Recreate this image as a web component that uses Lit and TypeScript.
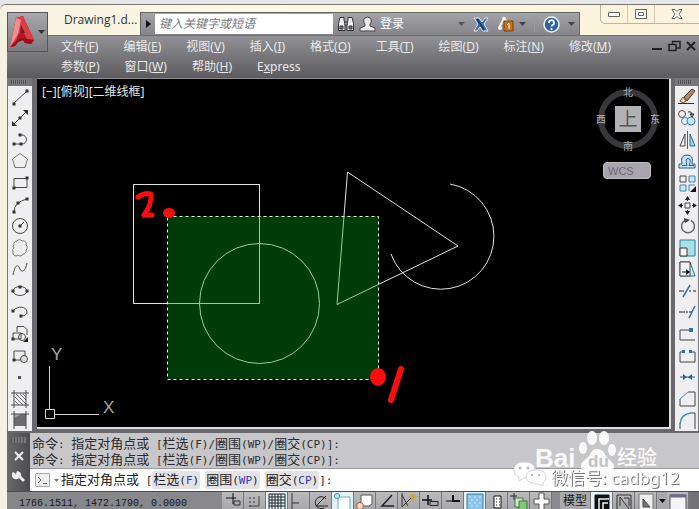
import { LitElement, html, svg, css, type TemplateResult } from "lit";
import { customElement } from "lit/decorators.js";
import { classMap } from "lit/directives/class-map.js";

type Tool = { label: string; art: TemplateResult; on?: boolean };

const node = (x: number, y: number) => svg`<rect x=${x - 1.5} y=${y - 1.5} width="3" height="3" fill="#333" stroke="none"/>`;

const DRAW: Tool[] = [
  { label: "直线", art: svg`<path d="M4 16L17 4"/>${node(4, 17)}${node(17, 4)}` },
  { label: "构造线", art: svg`<path d="M4 16L16 4"/><path d="M2 13v5h5zM18 7V2h-5z" fill="#333" stroke="none"/>${node(10, 10)}` },
  { label: "多段线", art: svg`<path d="M10 5h2a4.500 4.500 0 0 1 0 9H3"/>${node(4, 14)}${node(11, 14)}${node(10, 5)}` },
  { label: "多边形", art: svg`<path d="M10 2.500L17.500 8 15 16.500H5L2.500 8z" stroke="#77777a"/>` },
  { label: "矩形", art: svg`<path d="M4 5.500h13v9H4z"/>${node(4, 15)}${node(17, 5)}` },
  { label: "圆弧", art: svg`<path d="M4 17Q4 7 17 4"/>${node(4, 17)}${node(8, 8)}${node(17, 4)}` },
  { label: "圆", art: svg`<circle cx="10" cy="10" r="7.500"/><path d="M10 10l4-4"/>${node(10, 10)}` },
  { label: "修订云线", art: svg`<path d="M4 7a3 3 0 0 1 3-4 3 3 0 0 1 5 0 3 3 0 0 1 4 4 3 3 0 0 1 0 5 3 3 0 0 1-3 4 3 3 0 0 1-5 1 3 3 0 0 1-5-3 3 3 0 0 1 1-4 2 2 0 0 1 0-3z" stroke="#77777a"/>` },
  { label: "样条曲线", art: svg`<path d="M3 16C6 2 9 7 10 10S15 14 17 4"/>` },
  { label: "椭圆", art: svg`<ellipse cx="10" cy="10" rx="7" ry="4.500"/>${node(3, 10)}${node(17, 10)}${node(10, 6)}` },
  { label: "椭圆弧", art: svg`<path d="M4 8c3-4 13-4 13 2 0 3-3 4-6 4"/>${node(3, 9)}${node(11, 14)}` },
  { label: "插入块", art: svg`<path d="M7 2.500h7l3 3V11M7 2.500V8M3 9h8v6H3z"/><circle cx="12" cy="13" r="3.500"/><path d="M18 13v5h-5z" fill="#222" stroke="none"/>${node(3, 15)}` },
  { label: "创建块", art: svg`<path d="M4 5h11v9H4z"/><circle cx="14" cy="13" r="3.500" fill="#ddd"/>${node(4, 14)}` },
  { label: "点", art: svg`<rect x="8" y="9" width="3" height="3" fill="#555" stroke="none"/>` },
  { label: "图案填充", art: svg`<path d="M4 1v18M16 1v18M1 4h18M1 16h18"/><path d="M5 8l8 8M5 12l4 4M6 5l10 10M10 5l6 6M13 5l3 3" stroke-width=".8"/>` },
  { label: "渐变色", art: svg`<path d="M4 4h12v12H4z" fill="#a2a2a6" stroke="none"/><path d="M4 8L12 4h4v12H4z" fill="#6c6c70" stroke="none"/><path d="M4 1v18M16 1v18M1 4h18"/>` },
];

const MODIFY: Tool[] = [
  { label: "删除", art: svg`<path d="M1 16.500h16" stroke="#333"/><path d="M6 10l3 4-3 2-3-2z" fill="#f3d9b8" stroke="#8a4b20"/><path d="M7 10L15 2l3 2-8 10z" fill="#a8876a" stroke="#5b3a22"/>` },
  { label: "复制", art: svg`<circle cx="5" cy="6" r="3.500"/><circle cx="8" cy="13" r="3.500" stroke="#3f86b5"/><circle cx="14" cy="13" r="4" fill="#bfe6f6" stroke="#3f86b5"/><path d="M11 4q4-1 4 3M13 6h4l-2 3z" stroke="#222"/>` },
  { label: "镜像", art: svg`<path d="M8 4v12H3z"/><path d="M13 4v12h5z" fill="#9fd0e8" stroke="#2c6c96"/><path d="M10.500 1v18" stroke="#2c6c96"/>` },
  { label: "偏移", art: svg`<path d="M2 17h16v-4h-3q2-9-5-9t-5 9H2z" fill="#c4e4f3" stroke="#2c5f86"/><path d="M5 14.500h5q-2-7 1-7 4 0 1 7h5" stroke="#2c5f86"/>` },
  { label: "阵列", art: svg`<path d="M3 3h6v6H3z"/><path d="M12 3h6v6h-6zM3 12h6v6H3z" fill="#c8e8f6" stroke="#3f86b5"/><path d="M12 18v-6h6" stroke="#3f86b5"/><path d="M19 13v6h-6z" fill="#111" stroke="none"/>` },
  { label: "移动", art: svg`<path d="M8 8h5v5H8z"/><path d="M10.500 2v4M10.500 15v4M2 10.500h4M15 10.500h4" stroke="#222"/><path d="M8 5h5l-2.500-4zM8 16h5l-2.500 4zM5 8v5l-4-2.500zM16 8v5l4-2.500z" fill="#222" stroke="none"/>` },
  { label: "旋转", art: svg`<path d="M8 4.500a6.500 6.500 0 1 0 6 0" stroke="#66666a" stroke-width="1.500"/><path d="M7 2l6 2-5 3z" fill="#444" stroke="none"/>` },
  { label: "缩放", art: svg`<path d="M3 2h15v16H3z" fill="#a9e0ea" stroke="#2b7f98"/><path d="M3 10h7v8H3z" fill="#f4f8fa" stroke="#333"/>` },
  { label: "拉伸", art: svg`<path d="M3 3h10l5 14H3z" fill="#cfeaf4" stroke="#2b6c88"/><path d="M3 3v14h10V3z" fill="#f0f4f6" stroke="#444"/><path d="M5 13h6" stroke="#111"/><path d="M9 10v6l4-3z" fill="#111" stroke="none"/>` },
  { label: "修剪", art: svg`<path d="M2 10h5M12 10h2M16 10h3" stroke="#222"/><path d="M6 16L13 4" stroke="#2f74a3" stroke-width="1.500"/>` },
  { label: "延伸", art: svg`<path d="M2 10h6M9 10h2M12 10h3" stroke="#222"/><path d="M12 16L18 4" stroke="#2f74a3" stroke-width="1.500"/>` },
  { label: "打断于点", art: svg`<path d="M13 6H3v10h15" stroke="#444"/><rect x="12" y="4" width="4" height="4" fill="#2f74a3" stroke="none"/>` },
  { label: "打断", art: svg`<path d="M6 6H3v10h15V6h-3" stroke="#444"/><rect x="5" y="4" width="3" height="3" fill="#2f74a3" stroke="none"/><rect x="12" y="4" width="3" height="3" fill="#2f74a3" stroke="none"/>` },
  { label: "合并", art: svg`<path d="M3 10h15" stroke="#2f6485"/><path d="M6 7v6l4-3zM15 7v6l-4-3z" fill="#2f6485" stroke="none"/>` },
  { label: "倒角", art: svg`<path d="M3 10v7h15V3h-7" stroke="#444"/><path d="M3 10L11 3" stroke="#3f8fb5"/>` },
  { label: "圆角", art: svg`<path d="M3 13v6M18 3v16M14 3h4" stroke="#444"/><path d="M3 14Q4 4 14 3" stroke="#3f8fb5" stroke-width="1.500"/>` },
];

const STATUS: Tool[] = [
  { label: "推断约束", art: svg`<path d="M10 1v11M3 6h10" stroke="#111"/><path d="M11 9h6v4h-6z" stroke="#333"/>` },
  { label: "捕捉模式", art: svg`<path d="M4 6h2M8 6h2M4 10h2M8 10h2M4 14h2" stroke="#333"/><path d="M14 4v10H4" stroke="#444"/>` },
  { label: "栅格显示", on: true, art: svg`<path d="M2 2h16v18H2zM5 2v16M8 2v16M11 2v16M14 2v16M2 5h16M2 8h16M2 11h16M2 14h16" stroke="#222"/>` },
  { label: "正交模式", art: svg`<path d="M3 1v17M3 11h7" stroke="#333"/>` },
  { label: "极轴追踪", art: svg`<path d="M15 4L5 14h12M15 7a6 6 0 1 0-2 9" stroke="#222"/>` },
  { label: "对象捕捉", on: true, art: svg`<path d="M5 5h12v14H5z" fill="#fff" stroke="#6fa9c4"/><circle cx="4" cy="4" r="2.500" fill="#bde5f5" stroke="#4b90b5"/>` },
  { label: "三维对象捕捉", art: svg`<path d="M6 3h11v9l-3 2H6z" fill="#fff" stroke="#555"/><circle cx="5" cy="14" r="3.500" fill="#f1d9c8" stroke="#a06040"/>` },
  { label: "对象捕捉追踪", art: svg`<path d="M15 3L5 14h12" stroke="#222" stroke-width="1.500"/>` },
  { label: "动态 UCS", art: svg`<path d="M3 1v14L12 6M3 3l6 11" stroke="#333"/><path d="M14 1v9M10 5h9M11 2l6 6M17 2l-6 6" stroke="#d99b27"/>` },
  { label: "动态输入", art: svg`<path d="M7 3v10M1 8h10" stroke="#111" stroke-width="1.500"/><path d="M9 9.500h8v4H9z" stroke="#222"/>` },
  { label: "线宽", art: svg`<path d="M10 3v6" stroke="#111"/><path d="M3 9h7" stroke="#111"/><path d="M10 3v6h7" stroke="#111" stroke-width="2"/>` },
  { label: "透明度", on: true, art: svg`<path d="M2 2h16v18H2z" fill="#8cc4e8" stroke="#3a7ba8"/><path d="M4 5h2M9 5h2M14 5h2M6 8h2M11 8h2M4 11h2M9 11h2M14 11h2M6 14h2M11 14h2" stroke="#d6ecf8"/>` },
  { label: "快捷特性", art: svg`<path d="M7 4h7v12H7z" fill="#fff" stroke="#111"/><path d="M9 7h1M12 7h1M9 10h1M12 10h1M9 13h1M12 13h1" stroke="#111"/>` },
  { label: "选择循环", art: svg`<path d="M5 1v7M1 4h7" stroke="#222"/><path d="M6 6h8v9H6z" stroke="#3c7a38" fill="#cfe8c8"/><path d="M10 9h8v9h-8z" fill="#86c57c" stroke="#3c7a38"/>` },
  { label: "注释监视器", art: svg`<path d="M8 1h5v6h5v5h-5v6H8v-6H3V7h5z" fill="#fff" stroke="#555"/>` },
];

const LAYOUT: Tool[] = [
  { label: "快速查看布局", on: true, art: svg`<path d="M3 3h14v15H3z" fill="#111" stroke="#111"/><path d="M17 7H7v12M16 11h-5v8" stroke="#e8f4f8" stroke-width="1.500"/>` },
  { label: "注释比例", art: svg`<path d="M3 3h14v15H3z" stroke="#333"/><path d="M6 5l9 12M6 14V5M10 6h5v8" stroke="#333"/>` },
  { label: "注释可见性", art: svg`<path d="M3 2h14v16H3z" fill="#eee" stroke="#777"/><path d="M7 7l7 8H7z" fill="#777" stroke="#444"/>` },
];

const MENUS: [string, string, string][] = [
  ["文件(", "F", ")"], ["编辑(", "E", ")"], ["视图(", "V", ")"], ["插入(", "I", ")"], ["格式(", "O", ")"],
  ["工具(", "T", ")"], ["绘图(", "D", ")"], ["标注(", "N", ")"], ["修改(", "M", ")"],
  ["参数(", "P", ")"], ["窗口(", "W", ")"], ["帮助(", "H", ")"], ["E", "x", "press"],
];

const HISTORY = "命令: 指定对角点或 [栏选(F)/圈围(WP)/圈交(CP)]:";
const OPTIONS: [string, string][] = [["栏选", "F"], ["圈围", "WP"], ["圈交", "CP"]];

const icon = (art: TemplateResult) =>
  html`<svg class="icon" viewBox="0 0 20 20" fill="none" stroke="#4a4a4e" aria-hidden="true">${art}</svg>`;

/** Splits a line into runs so that Latin characters take half the width of the Chinese ones. */
const mixed = (line: string) =>
  (line.match(/[\u4e00-\u9fff]+|[^\u4e00-\u9fff]+/g) ?? []).map((run) =>
    /[\u4e00-\u9fff]/.test(run) ? run : html`<span class="mono">${run}</span>`);

@customElement("cad-toolbar")
class CadToolbar extends LitElement {
  static properties = { tools: { attribute: false }, name: {} };
  declare tools: Tool[];
  declare name: string;
  static styles = css`
    :host { display: flex; flex-direction: column; min-height: 0; background: #efeff2; }
    .grip { flex: none; height: 8px; box-sizing: border-box; border: 2px solid #77767a; border-width: 2px 6px 2px 3px;
      background: repeating-linear-gradient(90deg, #4c4b4f 0 1px, #858488 1px 2px); }
    .bar { flex: 1; min-height: 0; display: flex; flex-direction: column; }
    button { flex: 1 1 0; min-height: 0; padding: 0; border: 0; background: none; display: flex; align-items: center; justify-content: center; overflow: hidden; }
    .icon { width: 20px; height: 20px; flex: none; }
  `;
  render() {
    return html`<div class="grip"></div>
      <div class="bar" role="toolbar" aria-label=${this.name}>
        ${this.tools.map((t) => html`<button type="button" aria-label=${t.label}>${icon(t.art)}</button>`)}
      </div>`;
  }
}

@customElement("cad-canvas")
class CadCanvas extends LitElement {
  static styles = css`
    :host { display: block; position: relative; overflow: hidden; background: #000; color: #e6e6e6;
      font-family: "Noto Sans", "Noto Sans CJK SC", sans-serif; }
    .drawing { position: absolute; inset: 0; width: 100%; height: 100%; }
    .view { position: absolute; left: 5px; top: 4px; display: flex; font-size: 12px; line-height: 18px; }
    .view button, .cube button { font: inherit; color: inherit; background: none; border: 0; padding: 0; }
    .cube { position: absolute; right: 8px; top: 6px; width: 66px; display: grid; grid-template-columns: 12px 1fr 12px;
      grid-template-rows: 14px 40px 14px; place-items: center; font-size: 10px; line-height: 14px; color: #b4b4b8; }
    .ring { grid-area: 1 / 1 / 4 / 4; width: 48px; height: 48px; border: 6px solid #38383b; border-radius: 50%; }
    .n { grid-area: 1 / 2; } .w { grid-area: 2 / 1; } .e { grid-area: 2 / 3; } .s { grid-area: 3 / 2; }
    .n, .s, .w, .e { z-index: 1; }
    .cube .top { grid-area: 2 / 2; z-index: 1; width: 26px; height: 26px; background: #b2b2b5; color: #55555a; font-size: 19px; line-height: 24px; }
    .wcs { position: absolute; right: 18px; top: 83px; width: 48px; height: 17px; padding: 0 0 0 4px; text-align: left; border: 1px solid #c0bec5;
      border-radius: 4px; background: #a8a5ae; color: #6c6974; font: 11px/14px "Liberation Sans", sans-serif; }
    .ucs { position: absolute; left: 7px; bottom: 5px; width: 80px; height: 78px; font: 17px "Liberation Sans", sans-serif; }
  `;
  render() {
    return html`
      <svg class="drawing" role="img" aria-label="图形">
        <g fill="none" stroke="#e2e2e2">
          <rect x="96.500" y="105.500" width="126" height="119"/>
          <circle cx="222.500" cy="224.500" r="60"/>
          <path d="M310.500 93L421 167 300 225.500z"/>
          <path d="M413 105A53 53 0 1 1 354 175"/>
        </g>
        <rect x="131" y="137" width="211" height="163" fill="#00aa1e" fill-opacity=".35"/>
        <rect x="130.500" y="137.500" width="211" height="163" fill="none" stroke="#f0f0f0" stroke-dasharray="3 3"/>
        <g fill="none" stroke="#f90d0d" stroke-width="6" stroke-linecap="round" stroke-linejoin="round">
          <path d="M101 118Q108 113 114 115 115 125 107 136L115 136" stroke-width="5"/>
          <path d="M364 290L354 321"/>
        </g>
        <ellipse cx="132" cy="134" rx="6" ry="5" fill="#f90d0d"/>
        <ellipse cx="341" cy="298" rx="8" ry="9" fill="#f90d0d"/>
      </svg>
      <div class="view"><button type="button">[−]</button><button type="button">[俯视]</button><button type="button">[二维线框]</button></div>
      <div class="cube">
        <div class="ring"></div>
        <span class="n">北</span><span class="w">西</span>
        <button type="button" class="top">上</button>
        <span class="e">东</span><span class="s">南</span>
      </div>
      <button type="button" class="wcs">WCS</button>
      <svg class="ucs" viewBox="0 0 80 78" aria-label="UCS">
        <g fill="none" stroke="#d4d4d4"><path d="M1.500 65.500h9v9h-9zM5.500 65V22M10 70.500h45"/></g>
        <text x="7" y="16" fill="#a8a8a8">Y</text><text x="59" y="69" fill="#a8a8a8">X</text>
      </svg>`;
  }
}

@customElement("app-root")
class AppRoot extends LitElement {
  static styles = css`
    :host { display: flex; flex-direction: column; height: 100vh; overflow: hidden; position: relative; background: #e6e6ea;
      padding-top: 4px; box-sizing: border-box; font: 12px/18px "Noto Sans", "Noto Sans CJK SC", sans-serif; }
    button { font: inherit; color: inherit; background: none; border: 0; padding: 0; }
    svg { display: block; flex: none; }
    .icon { width: 20px; height: 20px; }
    .window { flex: 1; min-height: 0; display: flex; flex-direction: column; position: relative; padding-left: 7px;
      border-top: 1px solid #77766f; border-top-left-radius: 6px; background: linear-gradient(90deg, #f6f2e2, #fdf8e2 30%, #fdf3dc); }

    .app { position: absolute; left: 7px; top: 7px; width: 41px; height: 40px; display: flex; align-items: center; z-index: 1;
      border: 1px solid #55545a; background: linear-gradient(#a9a8ac, #7b7a7e); }
    .titlebar { flex: none; height: 30px; display: flex; align-items: flex-end; padding-left: 57px; }
    .doc { flex: none; width: 76px; align-self: center; margin: 0; font: 12px/18px "Open Sans", sans-serif; color: #333; }
    .info { flex: 1; height: 23px; box-sizing: border-box; min-width: 0; display: flex; align-items: center; gap: 4px; border: 1px solid #66656a; border-bottom: 0;
      background: linear-gradient(#a4a3a7, #858489); color: #fff; }
    .expand { width: 14px; align-self: stretch; display: grid; place-items: center; }
    .search { width: 178px; height: 20px; box-sizing: border-box; margin-left: -4px; border: 0; background: #fff; padding: 0 4px; font: italic 12px/20px "Noto Sans", "Noto Sans CJK SC", sans-serif; }
    .search::placeholder { color: #77777b; opacity: 1; }
    .login { display: flex; align-items: center; gap: 4px; }
    .grow { flex: 1; }
    .sep { width: 1px; height: 16px; background: #98979b; margin: 0 4px; }
    .controls { flex: none; align-self: flex-start; display: grid; grid-template-columns: 26px 27px 45px; height: 18px; margin-left: 20px;
      border: 1px solid #b9b5a8; border-width: 0 0 1px 1px; border-bottom-left-radius: 5px; }
    .controls button { display: grid; place-items: center; border-left: 1px solid #d0ccbe; }
    .controls button:first-child { border-left: 0; }

    .menubar { flex: none; display: flex; align-items: flex-start; justify-content: space-between; padding: 1px 3px 0 54px; box-sizing: border-box; min-height: 43px;
      background: linear-gradient(#929195, #5b5a5e); border-top: 1px solid #6f6e72; color: #e9e9eb; }
    .menus { flex: 0 1 570px; display: flex; flex-wrap: wrap; gap: 2px 25px; padding: 1px 0 0; margin: 0; list-style: none; }
    .menus u { text-underline-offset: 1px; }
    .mdi { flex: none; display: flex; gap: 5px; padding-top: 3px; }

    .work { flex: 1; min-height: 0; display: flex; background: #69686c; }
    .left { flex: none; width: 24px; margin-bottom: 2px; border-left: 1px solid #77767a; }
    .frame { flex: 1; min-width: 0; display: flex; margin: 0 4px 4px 5px; padding: 0 2px 2px 0; background: #dedee2; border-top: 1px solid #8b8a8e; }
    .frame cad-canvas { flex: 1; }
    .right { flex: none; width: 23px; margin-bottom: 2px; border-right: 1px solid #77767a; }

    .command { flex: none; display: grid; grid-template-columns: 23px 1fr; }
    .handle { grid-row: 1 / 3; display: flex; flex-direction: column; align-items: center; gap: 8px; background: linear-gradient(90deg, #6a696d, #4c4b4f); }
    .dots { width: 16px; height: 6px; margin-top: 4px; background: repeating-linear-gradient(90deg, #55545a 0 1px, #77767a 1px 3px); }
    .history { background: #c7c6c9; border-bottom: 1px solid #9b9a9e; padding: 3px 2px 0; height: 32px; color: #2c2c30; font-size: 13px; line-height: 15px; overflow: hidden; white-space: pre; }
    .history p { margin: 0; }
    .mono { font-family: "DejaVu Sans Mono", monospace; font-size: 11px; }
    .prompt { display: flex; align-items: center; height: 22px; padding-left: 5px; background: #fff; color: #222; font-size: 13px; line-height: 17px; white-space: pre; }
    .recent { display: flex; align-items: center; gap: 4px; margin-right: 2px; }
    .option { background: #e3e2e6; padding: 0 1px; margin-right: 5px; border-radius: 2px; }
    .option b { font-weight: 400; color: #3a35b5; }
    .option.last { margin-right: 0; }
    .entry { flex: 1; min-width: 0; border: 0; padding: 0 4px; background: none; font: inherit; outline: 0; }

    .status { flex: none; height: 18px; overflow: hidden; display: flex; align-items: flex-start; box-sizing: border-box; border-top: 1px solid #4c4b4f;
      background: linear-gradient(90deg, #87868a, #8b8a8e 80%, #737276); color: #19191b; }
    .coords { flex: none; width: 215px; padding: 5px 0 0 12px; box-sizing: border-box; white-space: pre; font: 10px/12px "Liberation Mono", monospace; }
    .coords { padding-top: 6px; }
    .toggles { display: flex; }
    .toggle { flex: none; width: 22px; height: 24px; box-sizing: border-box; border: 1px solid #77767a; border-width: 0 1px 0 0; background: linear-gradient(#bbbabd, #a09fa3); display: flex; justify-content: center; }
    .toggle.on { background: #e4f1f6; }
    .model { width: 31px; height: 17px; line-height: 17px; margin-left: 8px; background: #aaa9ad; border-right: 1px solid #77767a; }
    .drop { width: 10px; height: 18px; display: grid; place-items: center; background: #a8a7ab; }

    .mark { position: absolute; right: 16px; bottom: 14px; width: 172px; height: 66px; pointer-events: none; }
    .account { filter: drop-shadow(1px 1px 0 #77777b); }
  `;

  private caret(color = "#333") {
    return html`<svg width="7" height="5" viewBox="0 0 7 5" aria-hidden="true"><path d="M0 0h7L3.500 4z" fill=${color}/></svg>`;
  }

  private toggle(t: Tool) {
    return html`<button type="button" class=${classMap({ toggle: true, on: !!t.on })} aria-label=${t.label} aria-pressed=${t.on ? "true" : "false"}>${icon(t.art)}</button>`;
  }

  render() {
    return html`
      <div class="window">
        <button type="button" class="app" aria-label="应用程序菜单">
          <svg width="30" height="36" viewBox="0 0 30 36" aria-hidden="true">
            <path d="M8 4l7-2 11 24-3 4-6-1-2-3-5 2-3 4-5 1z" fill="#b5161f"/>
            <path d="M8 4l7-2 11 24-7-1-3-6h-5l-3 8-6 6z" fill="#dd3f48"/>
            <path d="M8 4l5 2-3 14-8 13z" fill="#f08d90"/>
            <path d="M13 11l4 8h-5z" fill="#7c1a22"/>
            <path d="M8 27l3-2 5-1 3 1 7 1-3 4-6-1-2-3-5 2-3 4-5 1z" fill="#9c0e18"/>
          </svg>${this.caret()}
        </button>
        <header class="titlebar">
          <h1 class="doc">Drawing1.d...</h1>
          <div class="info">
            <button type="button" class="expand" aria-label="收拢"><svg width="5" height="8" viewBox="0 0 5 8"><path d="M0 0v8l5-4z" fill="#111"/></svg></button>
            <input class="search" type="search" aria-label="搜索" placeholder="键入关键字或短语"/>
            <button type="button" aria-label="查找"><svg width="18" height="16" viewBox="0 0 18 16" fill="#eee" stroke="#333"><path d="M3 1.500h4v3l1 3v7H1.500v-7zM11 1.500h4l1.500 6v7H10v-7l1-3z"/><path d="M8 6h2v3H8z"/><path d="M3 10h3v3H3zM12 10h3v3h-3z" fill="#777"/></svg></button>
            <button type="button" class="login"><svg width="17" height="16" viewBox="0 0 17 16" fill="#eee" stroke="#444"><path d="M8.500 1a4 4 0 0 1 2.500 7v2l5 2v3H1v-3l5-2V8a4 4 0 0 1 2.500-7z"/></svg>登录</button>
            <span class="grow"></span>
            <button type="button" aria-label="登录选项">${this.caret("#555")}</button>
            <span></span>
            <button type="button" aria-label="Exchange"><svg width="16" height="15" viewBox="0 0 16 15"><path d="M1 1h5l3 4 3-4h3l-4 6 4 7h-5l-3-4-3 4H1l4-7z" fill="#3569a8" stroke="#e8eef6"/><path d="M4 2l7 11" stroke="#173f73" stroke-width="2"/></svg></button>
            <span></span>
            <button type="button" aria-label="Autodesk 360"><svg width="18" height="16" viewBox="0 0 18 16"><path d="M2 12L7 2l4 5" fill="none" stroke="#eee" stroke-width="2"/><circle cx="7" cy="3" r="2" fill="#eee"/><circle cx="3" cy="12" r="2" fill="#eee"/><path d="M7 5h9v10H7z" fill="#c8701b" stroke="#7c3f0a"/><path d="M12 7v6M12 7l-2 2" stroke="#fff"/></svg></button>
            <button type="button" aria-label="360 选项">${this.caret("#444")}</button>
            <span class="sep"></span>
            <button type="button" aria-label="帮助"><svg width="17" height="17" viewBox="0 0 17 17"><circle cx="8.500" cy="8.500" r="7.500" fill="#2f62a4" stroke="#f2f2f2" stroke-width="1.500"/><path d="M6 7a2.500 2.500 0 1 1 3.500 2q-1 .5-1 1.500M8.500 12v2" fill="none" stroke="#fff" stroke-width="1.800"/></svg></button>
            <span></span>
            <button type="button" aria-label="帮助选项">${this.caret("#444")}</button>
            <span></span>
          </div>
          <div class="controls">
            <button type="button" aria-label="最小化"><svg width="12" height="5" viewBox="0 0 12 5"><path d="M.5.500h11v4H.5z" fill="#fff" stroke="#666"/></svg></button>
            <button type="button" aria-label="最大化"><svg width="12" height="10" viewBox="0 0 12 10" stroke="#666" fill="#fff"><path d="M.5.500h11v9H.5zM3.500 3.500h5v3h-5z"/></svg></button>
            <button type="button" aria-label="关闭"><svg width="12" height="10" viewBox="0 0 12 10"><path d="M1 .5h3l2 2 2-2h3L8 5l3 4.500H8l-2-2-2 2H1L4 5z" fill="#fff" stroke="#666"/></svg></button>
          </div>
        </header>
        <nav class="menubar">
          <ul class="menus">${MENUS.map(([a, k, b]) => html`<li><button type="button">${a}<u>${k}</u>${b}</button></li>`)}</ul>
          <div class="mdi">
            <button type="button" aria-label="最小化图形"><svg width="11" height="12" viewBox="0 0 11 12"><path d="M0 9h10" stroke="#222" stroke-width="2"/></svg></button>
            <button type="button" aria-label="还原图形"><svg width="13" height="12" viewBox="0 0 13 12" fill="none" stroke="#222" stroke-width="1.500"><path d="M1 4.500h7v6H1zM4.500 4V1.500H12V8H8.500"/></svg></button>
            <button type="button" aria-label="关闭图形"><svg width="10" height="12" viewBox="0 0 10 12"><path d="M1 2l8 8M9 2l-8 8" stroke="#222" stroke-width="2"/></svg></button>
          </div>
        </nav>
        <main class="work">
          <cad-toolbar class="left" name="绘图" .tools=${DRAW}></cad-toolbar>
          <div class="frame"><cad-canvas></cad-canvas></div>
          <cad-toolbar class="right" name="修改" .tools=${MODIFY}></cad-toolbar>
        </main>
        <section class="command" aria-label="命令行">
          <div class="handle">
            <span class="dots"></span>
            <button type="button" aria-label="关闭命令行"><svg width="10" height="10" viewBox="0 0 10 10"><path d="M1 1l8 8M9 1L1 9" stroke="#eee" stroke-width="2"/></svg></button>
            <button type="button" aria-label="自定义"><svg width="14" height="14" viewBox="0 0 14 14"><path d="M1 3l3 2 1-3a4 4 0 0 1 4 5l4 4-2 2-4-4a4 4 0 0 1-6-6z" fill="#f0f0f0"/></svg></button>
          </div>
          <div class="history"><p>${mixed(HISTORY)}</p><p>${mixed(HISTORY)}</p></div>
          <div class="prompt">
            <button type="button" class="recent" aria-label="最近使用的命令"><svg width="15" height="14" viewBox="0 0 15 14"><path d="M.5.500h14v13H.5z" fill="#eee" stroke="#aaa"/><path d="M3 4l3 3-3 3M8 10.500h4" fill="none" stroke="#666"/></svg><svg width="5" height="3" viewBox="0 0 5 3"><path d="M0 0h5L2.500 3z" fill="#777"/></svg></button><label for="entry">${mixed("指定对角点或 [")}</label>${OPTIONS.map(([name, key], i) =>
              html`<button type="button" class=${classMap({ option: true, last: i === OPTIONS.length - 1 })}>${name}<span class="mono">(<b>${key}</b>)</span></button>`)}<span class="mono">]:</span><input id="entry" class="entry" type="text"/>
          </div>
        </section>
        <footer class="status">
          <span class="coords">1766.1511, 1472.1790, 0.0000</span>
          <div class="toggles">${STATUS.map((t) => this.toggle(t))}</div>
          <button type="button" class="model">模型</button>
          <div class="toggles">${LAYOUT.map((t) => this.toggle(t))}</div>
          <button type="button" class="drop" aria-label="比例列表">${this.caret("#111")}</button>
          ${this.toggle({ label: "全屏显示", art: svg`<path d="M2 3h16v17H2z" fill="#f4f4f6" stroke="#555"/><path d="M2 4h16" stroke="#6b6a90" stroke-width="3"/>` })}
        </footer>
      </div>
      <svg class="mark" viewBox="0 0 172 66" aria-hidden="true">
        <g fill="#fff" fill-opacity=".92">
          <text x="24" y="38" font-family="Liberation Sans, sans-serif" font-weight="700" font-size="26">Bai</text>
          <ellipse cx="72" cy="19" rx="4" ry="6"/><ellipse cx="81" cy="9" rx="5" ry="7"/><ellipse cx="93" cy="9" rx="5" ry="7"/><ellipse cx="101" cy="21" rx="4" ry="6"/>
          <path d="M86 20q6 0 9 7c3 5 8 6 8 10 0 6-7 5-16 5s-17 1-17-5c0-5 5-6 8-10 2-4 4-7 8-7z"/>
          <text x="106" y="36" font-family="Noto Sans CJK SC, sans-serif" font-weight="500" font-size="20">经验</text>
        </g>
        <text x="77" y="38" font-family="Liberation Sans, sans-serif" font-weight="700" font-size="17" fill="#c3c2c6">du</text>
        <g fill="#fff" stroke="#d5d5d8">
          <path d="M13 33c7 0 11 3 11 8s-4 8-11 8l-5 3v-4c-3-1-5-4-5-7 0-5 4-8 10-8z"/>
          <path d="M25 41c7 0 10 3 10 7 0 3-2 5-3 6v3l-4-2c-8 0-13-3-13-7 0-4 4-7 10-7z"/>
        </g>
        <g fill="#b9b9bd"><circle cx="9" cy="39" r="1.500"/><circle cx="17" cy="39" r="1.500"/><circle cx="21" cy="46" r="1.200"/><circle cx="28" cy="46" r="1.200"/></g>
        <text class="account" x="40" y="55" fill="#f4f4f6" font-family="Noto Sans, Noto Sans CJK SC, sans-serif" font-size="17">微信号: cadbg12</text>
      </svg>`;
  }
}
